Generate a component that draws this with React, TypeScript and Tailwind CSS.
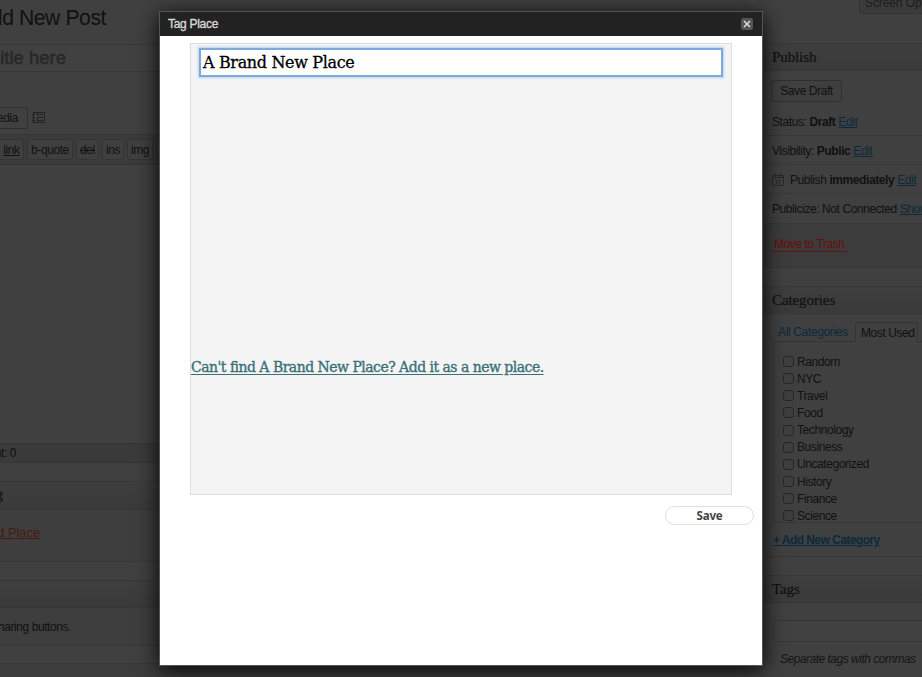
import React from "react";

const SANS = "font-['Liberation_Sans',Arial,sans-serif]";
const SERIF = "font-['Liberation_Serif',Georgia,serif] [-webkit-text-stroke:0.2px]";
const SMALL = "text-[12px] tracking-[-0.42px]";
const categories = ["Random", "NYC", "Travel", "Food", "Technology", "Business", "Uncategorized", "History", "Finance", "Science"];

/* Right-aligned run of text whose beginning is cut off by the window's edge. */
function Clipped({ className, children }: { className: string; children: React.ReactNode }) {
  return <div className={`flex items-center justify-end whitespace-nowrap ${className}`}>{children}</div>;
}

function PanelHead({ title }: { title?: string }) {
  return (
    <div className={`flex h-[28px] shrink-0 items-center border-y border-[#373737] bg-gradient-to-b from-[#3e3e3e] to-[#3a3a3a] pl-[22px] text-[15px] tracking-[-0.1px] text-[#111] ${SERIF}`}>
      {title}
    </div>
  );
}

function Quick({ children, className }: { children: React.ReactNode; className: string }) {
  return (
    <span className={`flex h-[21px] shrink-0 items-center justify-center rounded-[3px] border border-[#343434] bg-[#3f3f3f] ${SMALL} ${className}`}>
      {children}
    </span>
  );
}

function Editor() {
  return (
    <div className="flex w-[200px] flex-col overflow-hidden">
      <Clipped className="h-[44px] w-[106px] pb-[8px] text-[21.2px] tracking-[-0.45px] text-[#111]">dd New Post</Clipped>
      <div className="h-[28px] border-y border-[#373737] bg-[#414141]">
        <Clipped className="h-[25px] w-[66px] text-[18.5px] text-[#272727] [-webkit-text-stroke:0.4px]">title here</Clipped>
      </div>
      <div className="flex h-[62px] items-start gap-[4px] pt-[35px]">
        <Clipped className={`h-[22px] w-[28px] rounded-r-[3px] border border-l-0 border-[#2f2f2f] pr-[9px] ${SMALL}`}>edia</Clipped>
        <svg className="mt-[5px] h-[11px] w-[13px]" viewBox="0 0 13 11" fill="none" stroke="#222">
          <rect x="1.5" y=".5" width="11" height="10" />
          <path d="M0 2.5h3M0 5.5h3M0 8.5h3M8 2.5h3M6 5.5h5M6 8.5h5M5.5 5v5" />
          <path d="M5 2.5h2" strokeWidth="2" />
        </svg>
      </div>
      <div className="flex h-[31px] items-start gap-[3px] border-y border-[#343434] bg-[#3b3b3b] pt-[4px]">
        <Quick className="w-[24px] rounded-l-none border-l-0 underline">link</Quick>
        <Quick className="w-[46px]">b-quote</Quick>
        <Quick className="w-[23px] line-through">del</Quick>
        <Quick className="w-[22px]">ins</Quick>
        <Quick className="w-[26px]">img</Quick>
        <Quick className="w-[26px]">{null}</Quick>
      </div>
      <div className="h-[278px] bg-[#404040]" />
      <div className="h-[20px] border-y border-[#353535] bg-[#3a3a3a]">
        <Clipped className={`h-[18px] w-[16px] ${SMALL}`}>nt: 0</Clipped>
      </div>
      <div className="h-[18px]" />
      <div className={`h-[29px] border-y border-[#373737] bg-gradient-to-b from-[#3e3e3e] to-[#3a3a3a] ${SERIF}`}>
        <Clipped className="h-[25px] w-[3px] text-[15px]">g</Clipped>
      </div>
      <div className="h-[52px] border-b border-[#373737] bg-[#3e3e3e]">
        <Clipped className="h-[45px] w-[40px] text-[12.8px] text-[#4a190d] underline underline-offset-[1px]">d Place</Clipped>
      </div>
      <div className="h-[18px]" />
      <div className="h-[28px] border-y border-[#373737] bg-gradient-to-b from-[#3e3e3e] to-[#3a3a3a]" />
      <div className="h-[38px] border-b border-[#373737] bg-[#3e3e3e]">
        <Clipped className={`h-[37px] w-[71px] ${SMALL}`}>haring buttons.</Clipped>
      </div>
      <div className="h-[17px]" />
      <div className="flex-1 border-t border-[#373737] bg-[#3c3c3c]" />
    </div>
  );
}

function Link({ children }: { children: React.ReactNode }) {
  return <span className="text-[#0b2a3b] underline underline-offset-[1px]">{children}</span>;
}

const ROW = "flex shrink-0 items-center gap-[3px] whitespace-nowrap border-b border-[#393939] pl-[22px] pt-[1px]";

function Sidebar() {
  return (
    <div className={`flex w-[172px] flex-col overflow-hidden ${SMALL}`}>
      <div className="flex h-[43px] shrink-0 items-start pl-[109px]">
        <div className="-mt-[5px] h-[19px] w-[90px] shrink-0 overflow-hidden whitespace-nowrap rounded-b-[3px] border border-[#343434] bg-[#3b3b3b] pl-[5px] tracking-[-0.1px] leading-[14px] text-[#1d1d1d]">
          Screen Opti
        </div>
      </div>
      <PanelHead title="Publish" />
      <div className="flex h-[36px] shrink-0 items-start pl-[21px] pt-[9px]">
        <span className="flex h-[22px] w-[71px] items-center justify-center rounded-[3px] border border-[#2f2f2f] bg-[#3f3f3f]">Save Draft</span>
      </div>
      <div className={`${ROW} h-[29px]`}><span>Status:</span><b>Draft</b><Link>Edit</Link></div>
      <div className={`${ROW} h-[29px]`}><span>Visibility:</span><b>Public</b><Link>Edit</Link></div>
      <div className={`${ROW} h-[29px]`}>
        <svg className="mr-[3px] h-[13px] w-[12px] shrink-0" viewBox="0 0 12 13" fill="none" stroke="#292929">
          <path d="M.5 2.5h11v10H.5zM.5 4.5h11M3 0v4M9 0v4M4.5 7v4M7.5 7v4M3.5 7.5h1M6.5 7.5h1" />
        </svg>
        <span>Publish</span><b>immediately</b><Link>Edit</Link>
      </div>
      <div className={`${ROW} h-[30px]`}><span>Publicize: Not Connected</span><Link>Show</Link></div>
      <div className="flex h-[44px] shrink-0 items-start border-b border-[#373737] bg-[#3c3c3c] pl-[22px] pt-[12px]">
        <span className="h-[16px] border-b border-[#6a0d0d] px-[2px] leading-[16px] text-[#6a0d0d]">Move to Trash</span>
      </div>
      <div className="h-[18px] shrink-0" />
      <PanelHead title="Categories" />
      <div className="flex h-[28px] shrink-0 items-end pl-[23px]">
        <span className="flex h-[20px] w-[82px] shrink-0 items-center whitespace-nowrap border-b border-[#353535] pl-[5px] tracking-[-0.35px] text-[#0b2a3b]">All Categories</span>
        <span className="flex h-[20px] w-[63px] shrink-0 items-center whitespace-nowrap rounded-t-[3px] border border-b-0 border-[#353535] pl-[5px]">Most Used</span>
        <span className="h-[20px] flex-1 border-b border-[#353535]" />
      </div>
      <div className="ml-[23px] h-[181px] shrink-0 border-b border-l border-[#363636] pl-[9px] pt-[11px]">
        {categories.map((c) => (
          <div key={c} className="flex h-[17.15px] items-center gap-[3px] whitespace-nowrap">
            <span className="h-[11px] w-[11px] rounded-[3px] border border-[#262626] bg-[#3f3f3f]" />
            {c}
          </div>
        ))}
      </div>
      <div className="flex h-[34px] shrink-0 items-center border-b border-[#363636] pl-[23px] pt-[1px] font-bold tracking-[-0.55px]">
        <Link>+ Add New Category</Link>
      </div>
      <div className="h-[18px] shrink-0" />
      <PanelHead title="Tags" />
      <div className="flex shrink-0 flex-col pl-[23px] pt-[17px]">
        <div className="h-[22px] rounded-l-[3px] border border-r-0 border-[#363636] bg-[#414141]" />
        <span className="whitespace-nowrap pl-[7px] pt-[8px] italic leading-[18px] tracking-[-0.5px] text-[#161616]">Separate tags with commas</span>
      </div>
    </div>
  );
}

function Dialog() {
  return (
    <div className="absolute left-[159px] top-[11px] flex h-[655px] w-[604px] flex-col border border-[#555] bg-white shadow-[0_4px_20px_rgba(0,0,0,0.95)]">
      <div className="flex h-[24px] shrink-0 items-center justify-between bg-[#222] pl-[8px] pr-[9px]">
        <span className="text-[12px] tracking-[-0.3px] text-[#d8d8d8] [-webkit-text-stroke:0.35px]">Tag Place</span>
        <svg className="h-[12px] w-[12px]" viewBox="0 0 12 12">
          <rect width="12" height="12" rx="2" fill="#555" />
          <path d="M3 3l6 6M9 3L3 9" stroke="#ddd" strokeWidth="1.5" />
        </svg>
      </div>
      <div className="ml-[30px] mt-[7px] flex h-[452px] w-[542px] shrink-0 flex-col border border-[#dedede] bg-[#f4f4f4] font-['DejaVu_Serif',serif]">
        <div className="ml-[10px] mt-[6px] flex h-[25px] w-[520px] items-center whitespace-nowrap bg-white pl-[2px] text-[16px] tracking-[-0.35px] text-black shadow-[0_0_0_2px_#7da9dc,0_0_2px_3px_#b8d2f0] [-webkit-text-stroke:0.3px]">
          <span>A Brand New Place</span>
        </div>
        <div className="mt-[281px] whitespace-nowrap text-[14px] leading-[22px] tracking-[-0.52px] text-[#397078] underline underline-offset-[2px] [-webkit-text-stroke:0.35px]">
          Can't find A Brand New Place? Add it as a new place.
        </div>
      </div>
      <div className="flex justify-end pr-[8px] pt-[11px]">
        <span className="flex h-[19px] w-[89px] items-center justify-center rounded-full border border-[#dfdfdf] font-['Noto_Sans',sans-serif] text-[11.5px] font-bold tracking-[-0.2px] text-[#444]">Save</span>
      </div>
    </div>
  );
}

export default function App() {
  return (
    <div className={`relative flex h-[677px] w-[922px] justify-between overflow-hidden bg-[#404040] text-[#111] ${SANS}`}>
      <Editor />
      <Sidebar />
      <Dialog />
    </div>
  );
}
